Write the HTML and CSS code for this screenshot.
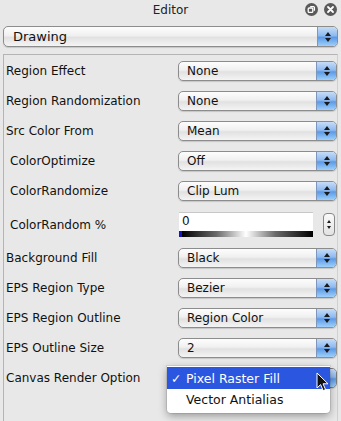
FILE: index.html
```html
<!DOCTYPE html>
<html lang="en">
<head>
    <meta charset="UTF-8">
    <title>Editor</title>
    <link rel="stylesheet" href="styles.css">
</head>
<body>
    <header class="titlebar">
        <span class="title">Editor</span>
        <div class="win-buttons">
            <svg class="win-btn" width="13" height="13" viewBox="0 0 13 13">
                <circle cx="6.5" cy="6.5" r="6.5" fill="#5a5a5a"/>
                <rect x="3.2" y="5" width="4.6" height="4.4" rx="1" fill="none" stroke="#fff" stroke-width="1.3"/>
                <path d="M5.2 3.6h3.2a1 1 0 0 1 1 1v3.2" fill="none" stroke="#fff" stroke-width="1.3"/>
            </svg>
            <svg class="win-btn" width="13" height="13" viewBox="0 0 13 13">
                <circle cx="6.5" cy="6.5" r="6.5" fill="#5a5a5a"/>
                <path d="M4 4l5 5M9 4l-5 5" stroke="#fff" stroke-width="1.8" stroke-linecap="round"/>
            </svg>
        </div>
    </header>

    <div class="popup popup-wide">
        <span class="popup-value">Drawing</span>
        <span class="arrows"><i class="up"></i><i class="down"></i></span>
    </div>

    <section class="panel">
        <div class="row">
            <span class="label">Region Effect</span>
            <div class="popup"><span class="popup-value">None</span><span class="arrows"><i class="up"></i><i class="down"></i></span></div>
        </div>
        <div class="row">
            <span class="label">Region Randomization</span>
            <div class="popup"><span class="popup-value">None</span><span class="arrows"><i class="up"></i><i class="down"></i></span></div>
        </div>
        <div class="row">
            <span class="label">Src Color From</span>
            <div class="popup"><span class="popup-value">Mean</span><span class="arrows"><i class="up"></i><i class="down"></i></span></div>
        </div>
        <div class="row">
            <span class="label indent">ColorOptimize</span>
            <div class="popup"><span class="popup-value">Off</span><span class="arrows"><i class="up"></i><i class="down"></i></span></div>
        </div>
        <div class="row">
            <span class="label indent">ColorRandomize</span>
            <div class="popup"><span class="popup-value">Clip Lum</span><span class="arrows"><i class="up"></i><i class="down"></i></span></div>
        </div>
        <div class="row row-tall">
            <span class="label indent">ColorRandom %</span>
            <div class="slider-field">
                <div class="field">
                    <span class="field-value">0</span>
                    <span class="gradient"></span>
                </div>
                <span class="stepper"><i class="up"></i><i class="down"></i></span>
            </div>
        </div>
        <div class="row">
            <span class="label">Background Fill</span>
            <div class="popup"><span class="popup-value">Black</span><span class="arrows"><i class="up"></i><i class="down"></i></span></div>
        </div>
        <div class="row">
            <span class="label">EPS Region Type</span>
            <div class="popup"><span class="popup-value">Bezier</span><span class="arrows"><i class="up"></i><i class="down"></i></span></div>
        </div>
        <div class="row">
            <span class="label">EPS Region Outline</span>
            <div class="popup"><span class="popup-value">Region Color</span><span class="arrows"><i class="up"></i><i class="down"></i></span></div>
        </div>
        <div class="row">
            <span class="label">EPS Outline Size</span>
            <div class="popup"><span class="popup-value">2</span><span class="arrows"><i class="up"></i><i class="down"></i></span></div>
        </div>
        <div class="row">
            <span class="label">Canvas Render Option</span>
            <div class="popup open">
                <span class="popup-value"></span>
                <span class="arrows"></span>
                <ul class="menu">
                    <li class="selected"><span class="check">✓</span>Pixel Raster Fill</li>
                    <li><span class="check"></span>Vector Antialias</li>
                </ul>
                <svg class="cursor" width="13" height="20" viewBox="0 0 13 20">
                    <path d="M1 1v15l3.6-3.4 2.6 6 2.4-1-2.6-5.8h5z" fill="#111" stroke="#fff" stroke-width="1"/>
                </svg>
            </div>
        </div>
    </section>
</body>
</html>
```

FILE: styles.css
```css
body {
    margin: 0;
    background: #e8e8e8;
    font-family: "DejaVu Sans", "Liberation Sans", sans-serif;
    font-size: 12px;
    color: #111;
    width: 341px;
    height: 421px;
    overflow: hidden;
}

.titlebar {
    height: 22px;
    display: flex;
    align-items: center;
    justify-content: center;
    position: relative;
}

.title {
    font-size: 12px;
    color: #222;
    margin-top: -3px;
}

.win-buttons {
    position: absolute;
    right: 4px;
    top: 3px;
    display: flex;
    gap: 6px;
}

.popup {
    position: relative;
    height: 20px;
    box-sizing: border-box;
    border: 1px solid #8c8c8c;
    border-radius: 5px;
    background: linear-gradient(#fdfdfd 0%, #f0f0f0 45%, #e1e1e1 55%, #f4f4f4 100%);
    display: flex;
    align-items: center;
    box-shadow: 0 1px 1px rgba(0, 0, 0, 0.15);
}

.popup-wide {
    margin: 4px 3px 0 3px;
    height: 21px;
}

.popup-value {
    flex: 1;
    padding-left: 8px;
    white-space: nowrap;
}

.popup-wide .popup-value {
    padding-left: 9px;
    font-size: 13px;
}

.arrows {
    width: 19px;
    align-self: stretch;
    border-left: 1px solid #7d96bd;
    border-radius: 0 4px 4px 0;
    background: linear-gradient(#c6dcf7 0%, #8fbaf0 45%, #5d9ae6 55%, #9fd0fb 100%);
    display: flex;
    flex-direction: column;
    align-items: center;
    justify-content: center;
    gap: 2px;
}

.up,
.down {
    width: 0;
    height: 0;
    border-left: 3px solid transparent;
    border-right: 3px solid transparent;
}

.up {
    border-bottom: 4px solid #1a1a1a;
}

.down {
    border-top: 4px solid #1a1a1a;
}

.panel {
    margin: 7px 3px 0 3px;
    border-top: 1px solid #b4b4b4;
    border-left: 1px solid #b4b4b4;
    border-right: 1px solid #d0d0d0;
    height: 360px;
    padding: 6px 0 0 0;
}

.row {
    display: flex;
    align-items: center;
    height: 20px;
    margin-bottom: 10px;
}

.row-tall {
    height: 27px;
}

.label {
    width: 172px;
    padding-left: 2px;
    white-space: nowrap;
}

.indent {
    padding-left: 6px;
    width: 168px;
}

.row .popup {
    width: 159px;
}

.slider-field {
    display: flex;
    align-items: center;
    width: 159px;
}

.field {
    width: 134px;
    height: 25px;
    margin-left: 1px;
    background: #fff;
    border-top: 1px solid #c8c8c8;
    display: flex;
    flex-direction: column;
    justify-content: space-between;
    box-sizing: border-box;
}

.field-value {
    padding: 1px 0 0 3px;
    font-size: 12px;
}

.gradient {
    height: 6px;
    background: linear-gradient(to right, #1515c8 0, #1515c8 3px, #000 3px, #6a6a6a 28%, #fff 50%, #6a6a6a 72%, #000 100%);
}

.stepper {
    width: 10px;
    height: 21px;
    margin-left: 10px;
    border: 1px solid #888;
    border-radius: 4px;
    background: linear-gradient(#fafafa, #e2e2e2);
    display: flex;
    flex-direction: column;
    align-items: center;
    justify-content: center;
    gap: 3px;
}

.stepper .up {
    border-bottom-width: 3px;
    border-left-width: 2.5px;
    border-right-width: 2.5px;
}

.stepper .down {
    border-top-width: 3px;
    border-left-width: 2.5px;
    border-right-width: 2.5px;
}

.popup.open {
    border-color: #7a7a7a;
}

.menu {
    position: absolute;
    left: -12px;
    top: -3px;
    width: 163px;
    margin: 0;
    padding: 1px 0 4px 0;
    list-style: none;
    background: #fff;
    border-radius: 0 0 4px 4px;
    box-shadow: 0 3px 8px rgba(0, 0, 0, 0.35), 0 0 0 1px rgba(0, 0, 0, 0.08);
    font-size: 12.5px;
}

.menu li {
    height: 20px;
    display: flex;
    align-items: center;
    white-space: nowrap;
}

.menu li.selected {
    background: #2b56e0;
    color: #fff;
    height: 22px;
}

.check {
    width: 19px;
    padding-left: 4px;
    box-sizing: border-box;
}

.cursor {
    position: absolute;
    left: 137px;
    top: 3px;
}
```
